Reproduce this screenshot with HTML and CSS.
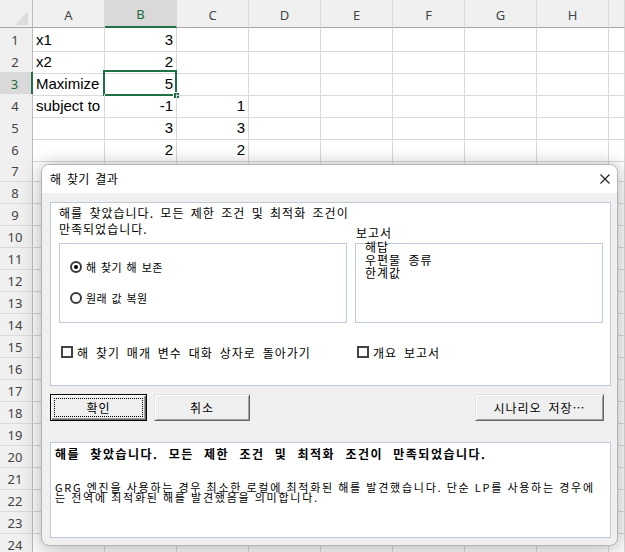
FILE: index.html
```html
<!DOCTYPE html>
<html lang="ko">
<head>
<meta charset="utf-8">
<title>해 찾기 결과</title>
<link rel="stylesheet" href="styles.css">
</head>
<body>
<div class="sheet">
  <div class="row head">
    <div class="corner"><svg width="32" height="27" viewBox="0 0 32 27"><polygon points="15,25 28,25 28,11" fill="#dcdcdc"/></svg></div>
    <div class="ch">A</div><div class="ch on">B</div><div class="ch">C</div><div class="ch">D</div><div class="ch">E</div><div class="ch">F</div><div class="ch">G</div><div class="ch">H</div><div class="ch"></div>
  </div>
  <div class="row"><div class="rh">1</div><div class="c">x1</div><div class="c n">3</div><div class="c"></div><div class="c"></div><div class="c"></div><div class="c"></div><div class="c"></div><div class="c"></div><div class="c"></div></div>
  <div class="row"><div class="rh">2</div><div class="c">x2</div><div class="c n">2</div><div class="c"></div><div class="c"></div><div class="c"></div><div class="c"></div><div class="c"></div><div class="c"></div><div class="c"></div></div>
  <div class="row"><div class="rh on">3</div><div class="c">Maximize</div><div class="c n active">5<span class="selbox"></span><span class="handle"></span></div><div class="c"></div><div class="c"></div><div class="c"></div><div class="c"></div><div class="c"></div><div class="c"></div><div class="c"></div></div>
  <div class="row"><div class="rh">4</div><div class="c">subject to</div><div class="c n">-1</div><div class="c n">1</div><div class="c"></div><div class="c"></div><div class="c"></div><div class="c"></div><div class="c"></div><div class="c"></div></div>
  <div class="row"><div class="rh">5</div><div class="c"></div><div class="c n">3</div><div class="c n">3</div><div class="c"></div><div class="c"></div><div class="c"></div><div class="c"></div><div class="c"></div><div class="c"></div></div>
  <div class="row"><div class="rh">6</div><div class="c"></div><div class="c n">2</div><div class="c n">2</div><div class="c"></div><div class="c"></div><div class="c"></div><div class="c"></div><div class="c"></div><div class="c"></div></div>
  <div class="row"><div class="rh">7</div><div class="c"></div><div class="c"></div><div class="c"></div><div class="c"></div><div class="c"></div><div class="c"></div><div class="c"></div><div class="c"></div><div class="c"></div></div>
  <div class="row"><div class="rh">8</div><div class="c"></div><div class="c"></div><div class="c"></div><div class="c"></div><div class="c"></div><div class="c"></div><div class="c"></div><div class="c"></div><div class="c"></div></div>
  <div class="row"><div class="rh">9</div><div class="c"></div><div class="c"></div><div class="c"></div><div class="c"></div><div class="c"></div><div class="c"></div><div class="c"></div><div class="c"></div><div class="c"></div></div>
  <div class="row"><div class="rh">10</div><div class="c"></div><div class="c"></div><div class="c"></div><div class="c"></div><div class="c"></div><div class="c"></div><div class="c"></div><div class="c"></div><div class="c"></div></div>
  <div class="row"><div class="rh">11</div><div class="c"></div><div class="c"></div><div class="c"></div><div class="c"></div><div class="c"></div><div class="c"></div><div class="c"></div><div class="c"></div><div class="c"></div></div>
  <div class="row"><div class="rh">12</div><div class="c"></div><div class="c"></div><div class="c"></div><div class="c"></div><div class="c"></div><div class="c"></div><div class="c"></div><div class="c"></div><div class="c"></div></div>
  <div class="row"><div class="rh">13</div><div class="c"></div><div class="c"></div><div class="c"></div><div class="c"></div><div class="c"></div><div class="c"></div><div class="c"></div><div class="c"></div><div class="c"></div></div>
  <div class="row"><div class="rh">14</div><div class="c"></div><div class="c"></div><div class="c"></div><div class="c"></div><div class="c"></div><div class="c"></div><div class="c"></div><div class="c"></div><div class="c"></div></div>
  <div class="row"><div class="rh">15</div><div class="c"></div><div class="c"></div><div class="c"></div><div class="c"></div><div class="c"></div><div class="c"></div><div class="c"></div><div class="c"></div><div class="c"></div></div>
  <div class="row"><div class="rh">16</div><div class="c"></div><div class="c"></div><div class="c"></div><div class="c"></div><div class="c"></div><div class="c"></div><div class="c"></div><div class="c"></div><div class="c"></div></div>
  <div class="row"><div class="rh">17</div><div class="c"></div><div class="c"></div><div class="c"></div><div class="c"></div><div class="c"></div><div class="c"></div><div class="c"></div><div class="c"></div><div class="c"></div></div>
  <div class="row"><div class="rh">18</div><div class="c"></div><div class="c"></div><div class="c"></div><div class="c"></div><div class="c"></div><div class="c"></div><div class="c"></div><div class="c"></div><div class="c"></div></div>
  <div class="row"><div class="rh">19</div><div class="c"></div><div class="c"></div><div class="c"></div><div class="c"></div><div class="c"></div><div class="c"></div><div class="c"></div><div class="c"></div><div class="c"></div></div>
  <div class="row"><div class="rh">20</div><div class="c"></div><div class="c"></div><div class="c"></div><div class="c"></div><div class="c"></div><div class="c"></div><div class="c"></div><div class="c"></div><div class="c"></div></div>
  <div class="row"><div class="rh">21</div><div class="c"></div><div class="c"></div><div class="c"></div><div class="c"></div><div class="c"></div><div class="c"></div><div class="c"></div><div class="c"></div><div class="c"></div></div>
  <div class="row"><div class="rh">22</div><div class="c"></div><div class="c"></div><div class="c"></div><div class="c"></div><div class="c"></div><div class="c"></div><div class="c"></div><div class="c"></div><div class="c"></div></div>
  <div class="row"><div class="rh">23</div><div class="c"></div><div class="c"></div><div class="c"></div><div class="c"></div><div class="c"></div><div class="c"></div><div class="c"></div><div class="c"></div><div class="c"></div></div>
  <div class="row"><div class="rh">24</div><div class="c"></div><div class="c"></div><div class="c"></div><div class="c"></div><div class="c"></div><div class="c"></div><div class="c"></div><div class="c"></div><div class="c"></div></div>
</div>

<div class="dialog">
  <div class="titlebar">
    <span class="title">해 찾기 결과</span>
    <svg class="close" width="10" height="10" viewBox="0 0 10 10"><path d="M0.5 0.5L9.5 9.5M9.5 0.5L0.5 9.5" stroke="#1f1f1f" stroke-width="1.1" fill="none"/></svg>
  </div>
  <div class="dbody">
    <div class="panel main">
      <p class="msg">해를 찾았습니다. 모든 제한 조건 및 최적화 조건이<br>만족되었습니다.</p>
      <div class="rlabel">보고서</div>
      <div class="group">
        <div class="radio"><span class="rb on"></span>해 찾기 해 보존</div>
        <div class="radio"><span class="rb"></span>원래 값 복원</div>
      </div>
      <ul class="list">
        <li>해답</li>
        <li>우편물 종류</li>
        <li>한계값</li>
      </ul>
      <div class="chk"><span class="cb"></span>해 찾기 매개 변수 대화 상자로 돌아가기</div>
      <div class="chk"><span class="cb"></span>개요 보고서</div>
    </div>
    <div class="buttons">
      <button class="btn default"><span class="focus">확인</span></button>
      <button class="btn">취소</button>
      <button class="btn wide">시나리오 저장…</button>
    </div>
    <div class="panel result">
      <p class="res-title">해를 찾았습니다. 모든 제한 조건 및 최적화 조건이 만족되었습니다.</p>
      <p class="res-body">GRG 엔진을 사용하는 경우 최소한 로컬에 최적화된 해를 발견했습니다. 단순 LP를 사용하는 경우에<br>는 전역에 최적화된 해를 발견했음을 의미합니다.</p>
    </div>
  </div>
</div>
</body>
</html>
```

FILE: styles.css
```css
* { box-sizing: border-box; }
html, body { margin: 0; padding: 0; }
body {
  width: 625px;
  height: 552px;
  overflow: hidden;
  position: relative;
  background: #fff;
  font-family: "Liberation Sans", Arial, sans-serif;
}

/* ---------- spreadsheet ---------- */
.sheet { display: flex; flex-direction: column; }
.row {
  display: grid;
  grid-template-columns: 33px repeat(8, 72px) 1fr;
  height: 22px;
}
.row > div {
  border-right: 1px solid #dadada;
  border-bottom: 1px solid #dadada;
}
.row.head { height: 28px; background: #f0f0f0; }
.row.head > div { border-bottom-color: #a6a6a6; }
.corner { border-right-color: #bcbcbc !important; }
.corner svg { display: block; }
.ch {
  font: 13px "Noto Sans", sans-serif;
  color: #444;
  display: flex;
  align-items: center;
  justify-content: center;
  padding-top: 2px;
}
.ch.on {
  background: #d9d9d9;
  color: #1e6b40;
  border-bottom: 2px solid #217346 !important;
}
.rh {
  background: #f0f0f0;
  border-right-color: #bcbcbc !important;
  font: 13px "Noto Sans", sans-serif;
  color: #444;
  display: flex;
  align-items: center;
  justify-content: center;
  padding-right: 2px;
}
.rh.on {
  background: #d9d9d9;
  color: #1e6b40;
  border-right: 2px solid #217346 !important;
}
.c {
  font-size: 15px;
  line-height: 23px;
  padding: 0 3px;
  color: #000;
  white-space: nowrap;
  position: relative;
}
.c.n { text-align: right; }
.selbox {
  position: absolute;
  left: -2px;
  top: -2px;
  right: -1px;
  bottom: -1px;
  border: 2px solid #1e7145;
}
.handle {
  position: absolute;
  right: -4px;
  bottom: -4px;
  width: 7px;
  height: 7px;
  background: #1e7145;
  border: 1px solid #fff;
}

/* ---------- dialog ---------- */
.dialog {
  position: absolute;
  left: 41px;
  top: 164px;
  width: 577px;
  height: 382px;
  border: 1px solid #b4b4b4;
  border-radius: 8px;
  background: #f0f0f0;
  box-shadow: 0 0 16px rgba(0, 0, 0, 0.2), 0 8px 28px rgba(0, 0, 0, 0.14);
  overflow: hidden;
  display: flex;
  flex-direction: column;
  font-family: "Noto Sans CJK KR", sans-serif;
  font-size: 12px;
  letter-spacing: 1px;
  word-spacing: 2.5px;
  color: #000;
}
.titlebar {
  flex: none;
  height: 28px;
  background: #fff;
  display: flex;
  align-items: center;
  justify-content: space-between;
  padding: 0 7px 0 8px;
}
.title { line-height: 16px; letter-spacing: 0.3px; word-spacing: 2px; }
.close { display: block; }

.dbody {
  flex: 1;
  display: flex;
  flex-direction: column;
  padding: 9px 6px 7px 8px;
}
.panel { background: #fff; border: 1px solid #bfcbd8; }

.main {
  height: 184px;
  padding: 0 5px 0 8px;
  display: grid;
  grid-template-columns: 288px 248px;
  grid-template-rows: 40px 80px auto;
  column-gap: 8px;
}
.msg {
  margin: 0;
  padding-top: 2px;
  line-height: 16px;
  word-spacing: 2px;
  white-space: nowrap;
}
.rlabel {
  align-self: end;
  margin-bottom: 2px;
  padding-left: 1px;
  line-height: 16px;
}
.group {
  border: 1px solid #bfcbd8;
  padding: 15px 0 0 10px;
  display: flex;
  flex-direction: column;
  gap: 15px;
}
.radio {
  display: flex;
  align-items: center;
  height: 16px;
  font-size: 11px;
  letter-spacing: 0.3px;
  word-spacing: 1.3px;
  white-space: nowrap;
}
.rb {
  flex: none;
  width: 12px;
  height: 12px;
  border: 2px solid #3a3a3a;
  border-radius: 50%;
  background: #fff;
  margin-right: 4px;
  position: relative;
}
.rb.on::after {
  content: "";
  position: absolute;
  left: 2px;
  top: 2px;
  width: 4px;
  height: 4px;
  border-radius: 50%;
  background: #000;
}
.list {
  margin: 0;
  padding: 0 0 0 9px;
  list-style: none;
  border: 1px solid #bfcbd8;
  word-spacing: 3px;
}
.list li { line-height: 13px; white-space: nowrap; }
.list li:first-child { margin-top: -4px; }

.chk {
  display: flex;
  align-items: center;
  height: 16px;
  margin-top: 21px;
  padding-left: 2px;
  white-space: nowrap;
}
.cb {
  flex: none;
  width: 12px;
  height: 12px;
  border: 2px solid #444;
  background: #fff;
  margin-right: 4px;
}

.buttons {
  flex: none;
  display: flex;
  gap: 7px;
  margin-top: 8px;
  height: 27px;
}
.btn {
  width: 96px;
  height: 27px;
  padding: 0;
  font-family: "Noto Sans CJK KR", sans-serif;
  font-size: 12px;
  letter-spacing: 1px;
  word-spacing: 2.5px;
  color: #000;
  background: #efefef;
  border: 1px solid;
  border-color: #e3e3e3 #646464 #646464 #e3e3e3;
  box-shadow: inset 1px 1px #fff, inset -1px -1px #a0a0a0;
  display: flex;
  align-items: center;
  justify-content: center;
}
.btn.default {
  width: 97px;
  border-color: #000;
  box-shadow: inset 1px 1px #fff, inset -1px -1px #646464, inset -2px -2px #a0a0a0;
  padding: 3px;
}
.focus {
  width: 100%;
  height: 100%;
  border: 1px dotted #000;
  display: flex;
  align-items: center;
  justify-content: center;
}
.btn.wide { width: 129px; margin-left: auto; margin-right: 7px; }

.result {
  flex: none;
  height: 96px;
  margin-top: 21px;
  padding: 3px 4px 0 4px;
}
.res-title {
  margin: 0;
  font-weight: bold;
  line-height: 16px;
  letter-spacing: 1.5px;
  word-spacing: 5.4px;
  white-space: nowrap;
}
.res-body {
  margin: 20px 0 0;
  font-size: 11px;
  line-height: 10px;
  letter-spacing: 1.75px;
  word-spacing: -0.5px;
  white-space: nowrap;
}
```
